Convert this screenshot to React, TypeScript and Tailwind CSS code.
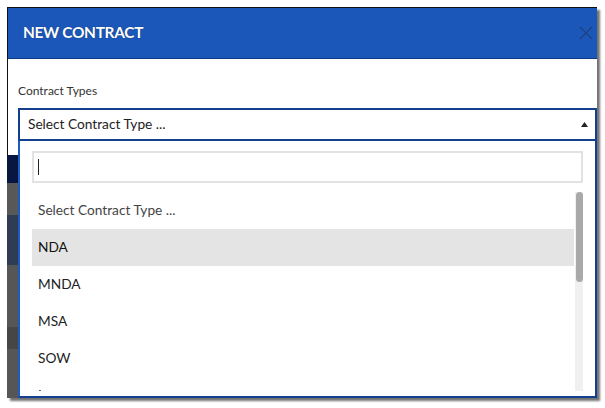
const options = ["Select Contract Type ...", "NDA", "MNDA", "MSA", "SOW", "Lease"];

const strips = [
   { h: 28, c: "bg-[#081741]" },
   { h: 32, c: "bg-[#585858]" },
   { h: 50, c: "bg-[#2e3c54]" },
   { h: 62, c: "bg-[#565656]" },
   { h: 22, c: "bg-[#464646]" },
   { h: 49, c: "bg-[#565656]" },
];

export default function App() {
   return (
      <div className="w-[605px] h-[408px] bg-white pt-[7px] pl-[7px]" style={{ fontFamily: "Lato, 'Open Sans', sans-serif" }}>
         <div className="w-[590px] h-[391px] flex flex-col border-t border-[#111] shadow-[3px_3px_2px_rgba(0,0,0,0.55)] overflow-hidden">
            {/* header */}
            <div className="h-[51px] shrink-0 flex items-center justify-between bg-[#1b57b9] border-l border-[#111] border-b border-b-[#0e3b87] pl-[15px] pr-[3px]">
               <span className="text-white font-bold text-[15.4px] tracking-[-0.3px] [text-shadow:0_0_1px_rgba(0,0,0,0.5)]">NEW CONTRACT</span>
               <svg width="14" height="14" viewBox="0 0 14 14" className="mr-[1px]">
                  <path d="M1 1 L13 13 M13 1 L1 13" stroke="#1f3f7e" strokeWidth="1.1" fill="none" />
               </svg>
            </div>

            {/* body */}
            <div className="shrink-0 bg-white border-l border-[#111] pl-[10px] pt-[24px]">
               <div className="text-[12px] leading-[15px] text-[#333] mb-[10px]">Contract Types</div>
               <div className="h-[33px] border-2 border-[#143f8e] flex items-center justify-between pl-[8px] pr-[7px] text-[13.7px] text-[#222]">
                  <span>Select Contract Type ...</span>
                  <svg width="7" height="5" viewBox="0 0 7 5">
                     <path d="M3.5 0 L7 5 L0 5 Z" fill="#222" />
                  </svg>
               </div>
            </div>

            <div className="flex flex-1 min-h-0">
               {/* page behind the modal */}
               <div className="w-[11px] shrink-0 flex flex-col">
                  <div className="h-[14px] bg-white border-l border-[#111]" />
                  {strips.map((s, i) => (
                     <div key={i} className={s.c} style={{ height: s.h }} />
                  ))}
               </div>

               {/* dropdown */}
               <div className="flex-1 flex flex-col bg-white border-l-2 border-r-2 border-b-2 border-[#1d5ac4] border-r-[#143f8e] border-b-[#143f8e] px-[12px] pt-[10px] min-h-0">
                  <div className="h-[32px] shrink-0 border-2 border-[#e2e2e2] flex items-center pl-[4px]">
                     <div className="w-px h-[16px] bg-[#222]" />
                  </div>
                  <div className="flex mt-[9px] h-[199px] overflow-hidden">
                     <div className="flex-1 flex flex-col">
                        {options.map((o, i) => (
                           <div
                              key={o}
                              className={`h-[37px] shrink-0 flex items-center pl-[6px] text-[13.7px] ${i === 1 ? "bg-[#e4e4e4] text-[#111]" : i === 0 ? "text-[#444]" : "text-[#222]"}`}
                           >
                              {o}
                           </div>
                        ))}
                     </div>
                     <div className="w-[8px] shrink-0 bg-[#f0f0f0] ml-px">
                        <div className="w-[7px] h-[90px] rounded-full bg-[#a9a9a9] mx-auto" />
                     </div>
                  </div>
               </div>
            </div>
         </div>
      </div>
   );
}
